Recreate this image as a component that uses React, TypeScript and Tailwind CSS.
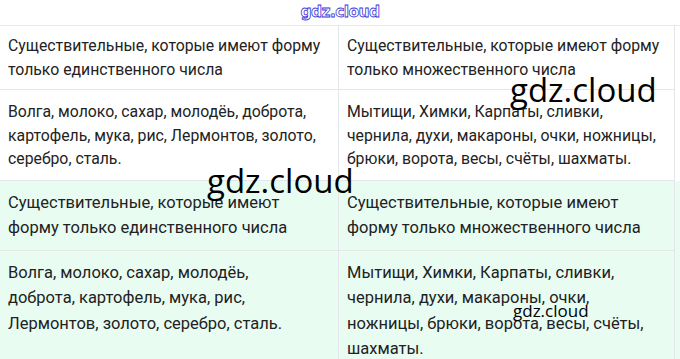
import React from "react";

type Cell = string[];
type Row = { left: Cell; right: Cell };

// строки разбиты так же, как на исходной картинке
const topRows: Row[] = [
  {
    left: ["Существительные, которые имеют форму", "только единственного числа"],
    right: ["Существительные, которые имеют форму", "только множественного числа"],
  },
  {
    left: [
      "Волга, молоко, сахар, молодёь, доброта,",
      "картофель, мука, рис, Лермонтов, золото,",
      "серебро, сталь.",
    ],
    right: [
      "Мытищи, Химки, Карпаты, сливки,",
      "чернила, духи, макароны, очки, ножницы,",
      "брюки, ворота, весы, счёты, шахматы.",
    ],
  },
];

const greenRows: Row[] = [
  {
    left: ["Существительные, которые имеют", "форму только единственного числа"],
    right: ["Существительные, которые имеют", "форму только множественного числа"],
  },
  {
    left: [
      "Волга, молоко, сахар, молодёь,",
      "доброта, картофель, мука, рис,",
      "Лермонтов, золото, серебро, сталь.",
    ],
    right: [
      "Мытищи, Химки, Карпаты, сливки,",
      "чернила, духи, макароны, очки,",
      "ножницы, брюки, ворота, весы, счёты,",
      "шахматы.",
    ],
  },
];

function Lines({ lines }: { lines: Cell }) {
  return (
    <>
      {lines.map((l, i) => (
        <div key={i} className="whitespace-nowrap">
          {l}
        </div>
      ))}
    </>
  );
}

function Table({ rows, green }: { rows: Row[]; green?: boolean }) {
  return (
    <div
      className={
        green
          ? "grid grid-cols-[339px_1fr] bg-[#e8fcf2] text-[16.5px] leading-[25.5px]"
          : "grid grid-cols-[339px_1fr] border-t border-[#e8e9ec] text-[15.8px] leading-[23.5px]"
      }
    >
      {rows.map((r, i) => {
        const pad = green ? "py-[9px]" : i === 0 ? "py-2" : "pt-[10px] pb-[9px]";
        return (
          <React.Fragment key={i}>
            <div className={"border-b border-r border-[#e4e7ea] px-2 " + pad}>
              <Lines lines={r.left} />
            </div>
            <div className={"border-b border-r border-[#e4e7ea] px-2 mr-[5px] " + pad}>
              <Lines lines={r.right} />
            </div>
          </React.Fragment>
        );
      })}
    </div>
  );
}

export default function App() {
  return (
    <main className="relative w-[680px] h-[359px] overflow-hidden bg-white text-[#222] font-['Roboto',sans-serif]">
      {/* шапка с логотипом */}
      <div className="h-[25px] flex items-center justify-center">
        <span className="font-['DejaVu_Sans',sans-serif] text-[15.5px] font-bold text-white [-webkit-text-stroke:0.8px_#3a32d8] tracking-[-0.6px]">
          gdz.cloud
        </span>
      </div>
      <Table rows={topRows} />
      <Table rows={greenRows} green />

      {/* водяные знаки */}
      <span className="absolute left-[510px] top-[73px] text-[33px] leading-none text-black font-['Open_Sans',sans-serif]">
        gdz.cloud
      </span>
      <span className="absolute left-[207px] top-[164px] text-[33px] leading-none text-black font-['Open_Sans',sans-serif]">
        gdz.cloud
      </span>
      <span className="absolute left-[513px] top-[302px] text-[17px] leading-none text-black font-['Open_Sans',sans-serif]">
        gdz.cloud
      </span>
    </main>
  );
}
